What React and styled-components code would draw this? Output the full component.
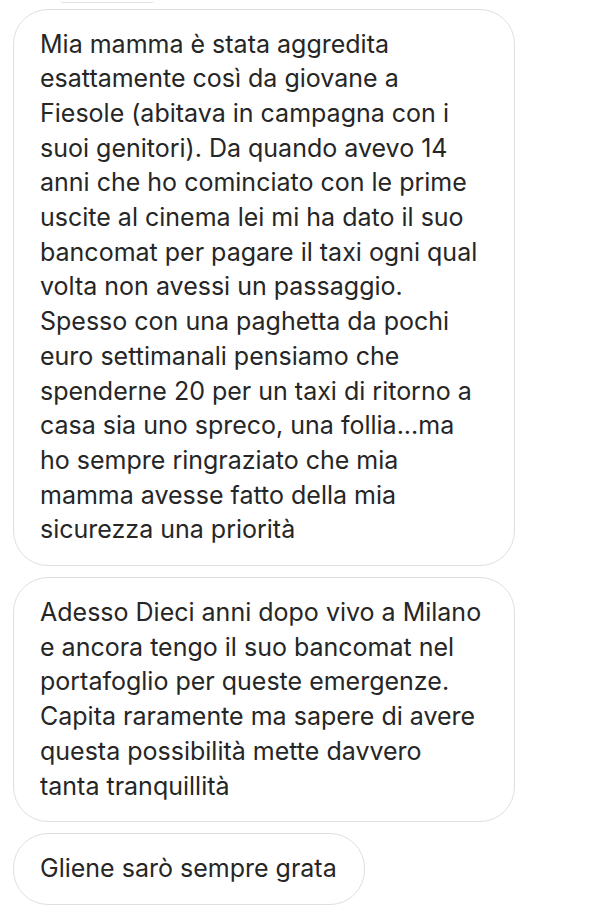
import React from 'react';
import styled, { createGlobalStyle } from 'styled-components';

const GlobalStyle = createGlobalStyle`
  html, body {
    margin: 0;
    padding: 0;
    background: #ffffff;
  }
  body {
    font-family: Inter, "Liberation Sans", Arial, sans-serif;
    -webkit-font-smoothing: antialiased;
  }
`;

const Thread = styled.div`
  display: flex;
  flex-direction: column;
  align-items: flex-start;
  gap: 11px;
  padding: 0 0 18px 13px;
  width: 605px;
  height: 923px;
  box-sizing: border-box;
  overflow: hidden;
`;

const CutBubble = styled.div`
  margin-left: 47px;
  margin-bottom: -5px;
  width: 94px;
  height: 2px;
  border-bottom: 1px solid #e3e3e3;
  border-radius: 0 0 20px 20px;
`;

const Bubble = styled.div`
  box-sizing: border-box;
  width: ${(p) => (p.$full ? '502px' : 'auto')};
  padding: 17px 27px 18px 26px;
  border: 1px solid #dfdfdf;
  border-radius: 35px;
  background: #ffffff;
  color: #262626;
  font-size: 25px;
  line-height: 34.7px;
`;

const Line = styled.div`
  white-space: nowrap;
`;

const messages = [
  {
    full: true,
    lines: [
      'Mia mamma è stata aggredita',
      'esattamente così da giovane a',
      'Fiesole (abitava in campagna con i',
      'suoi genitori). Da quando avevo 14',
      'anni che ho cominciato con le prime',
      'uscite al cinema lei mi ha dato il suo',
      'bancomat per pagare il taxi ogni qual',
      'volta non avessi un passaggio.',
      'Spesso con una paghetta da pochi',
      'euro settimanali pensiamo che',
      'spenderne 20 per un taxi di ritorno a',
      'casa sia uno spreco, una follia...ma',
      'ho sempre ringraziato che mia',
      'mamma avesse fatto della mia',
      'sicurezza una priorità',
    ],
  },
  {
    full: true,
    lines: [
      'Adesso Dieci anni dopo vivo a Milano',
      'e ancora tengo il suo bancomat nel',
      'portafoglio per queste emergenze.',
      'Capita raramente ma sapere di avere',
      'questa possibilità mette davvero',
      'tanta tranquillità',
    ],
  },
  {
    full: false,
    lines: ['Gliene sarò sempre grata'],
  },
];

export default function App() {
  return (
    <>
      <GlobalStyle />
      <Thread>
        <CutBubble />
        {messages.map((m, i) => (
          <Bubble key={i} $full={m.full}>
            {m.lines.map((l, j) => (
              <Line key={j}>{l}</Line>
            ))}
          </Bubble>
        ))}
      </Thread>
    </>
  );
}
